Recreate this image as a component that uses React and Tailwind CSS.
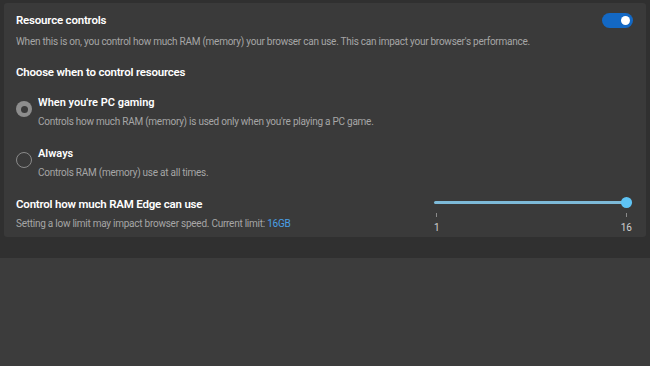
import { useState } from "react";

function Radio({ checked }) {
  return checked ? (
    <span className="mt-[7px] flex h-[16px] w-[16px] shrink-0 items-center justify-center rounded-full bg-[#8d8d8d]">
      <span className="h-[7px] w-[7px] rounded-full bg-[#3a3a3a]" />
    </span>
  ) : (
    <span className="mt-[7px] h-[16px] w-[16px] shrink-0 rounded-full border border-[#8a8a8a]" />
  );
}

export default function App() {
  const [mode, setMode] = useState("gaming");
  const [on, setOn] = useState(true);

  const options = [
    {
      id: "gaming",
      title: "When you're PC gaming",
      desc: "Controls how much RAM (memory) is used only when you're playing a PC game.",
    },
    {
      id: "always",
      title: "Always",
      desc: "Controls RAM (memory) use at all times.",
    },
  ];

  return (
    <div
      className="flex h-[366px] w-full flex-col bg-[#3c3c3c] text-white"
      style={{ fontFamily: 'Roboto, "Noto Sans", sans-serif' }}
    >
      <div className="bg-[#303030] px-[4px] pb-[21px] pt-[3px]">
        <div className="rounded-[3px] bg-[#3a3a3a] px-[12px] pb-[3px] pt-[8px]">
          {/* header */}
          <div className="flex items-center justify-between">
            <div className="text-[11.5px] font-semibold leading-[18px] tracking-[-0.2px]">Resource controls</div>
            <button
              onClick={() => setOn(!on)}
              className={
                "mr-[1px] flex h-[15px] w-[31px] items-center rounded-full px-[3px] " +
                (on ? "justify-end bg-[#1368c4]" : "justify-start bg-[#555]")
              }
            >
              <span className="h-[9px] w-[9px] rounded-full bg-white" />
            </button>
          </div>
          <p className="mt-[5px] text-[10px] leading-[15px] tracking-[-0.25px] text-[#a6a6a6]">
            When this is on, you control how much RAM (memory) your browser can use. This can impact your browser's performance.
          </p>

          <div className="mt-[14px] text-[11.5px] font-semibold leading-[18px] tracking-[-0.2px]">
            Choose when to control resources
          </div>

          <div className="mt-[13px] flex flex-col gap-[16px]">
            {options.map((o) => (
              <label
                key={o.id}
                className="flex cursor-pointer gap-[6px]"
                onClick={() => setMode(o.id)}
              >
                <Radio checked={mode === o.id} />
                <div>
                  <div className="text-[11px] font-semibold leading-[17px]">{o.title}</div>
                  <div className="mt-[3px] text-[10px] leading-[15px] tracking-[-0.25px] text-[#a6a6a6]">{o.desc}</div>
                </div>
              </label>
            ))}
          </div>

          <div className="mt-[15px] flex items-start justify-between">
            <div>
              <div className="text-[11.5px] font-semibold leading-[18px] tracking-[-0.2px]">
                Control how much RAM Edge can use
              </div>
              <div className="mt-[3px] text-[10px] leading-[15px] tracking-[-0.25px] text-[#a6a6a6]">
                Setting a low limit may impact browser speed. Current limit:{" "}
                <span className="text-[#4aa0e6]">16GB</span>
              </div>
            </div>
            <div className="mr-[2px] mt-[1px] w-[198px]">
              <div className="relative flex h-[12px] items-center">
                <div className="h-[3px] w-full rounded-full bg-[#7dbad8]" />
                <span className="absolute right-0 h-[11px] w-[11px] rounded-full bg-[#5ec3f4]" />
              </div>
              <div className="mt-[5px] flex justify-between">
                <div className="flex flex-col items-center">
                  <span className="h-[4px] w-px bg-[#8a8a8a]" />
                  <span className="mt-[5px] text-[10px] leading-[12px] text-[#d0d0d0]">1</span>
                </div>
                <div className="flex flex-col items-center">
                  <span className="h-[4px] w-px bg-[#8a8a8a]" />
                  <span className="mt-[5px] text-[10px] leading-[12px] text-[#d0d0d0]">16</span>
                </div>
              </div>
            </div>
          </div>
        </div>
      </div>
      <div className="flex-1" />
    </div>
  );
}
